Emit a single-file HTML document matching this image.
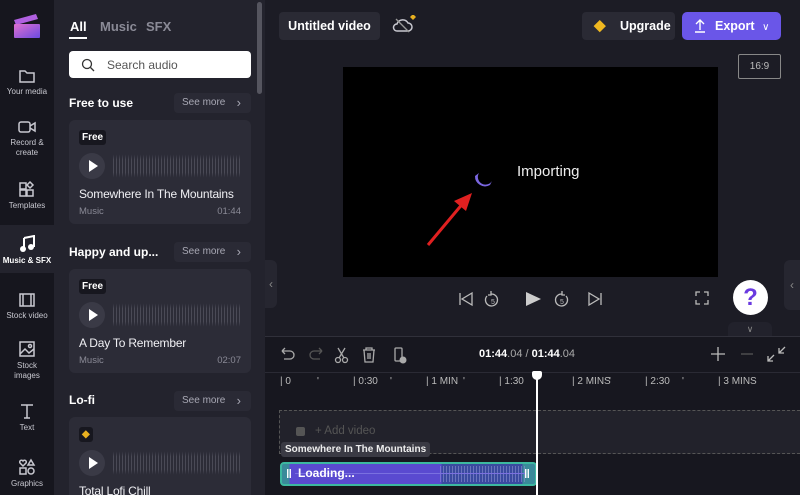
<!DOCTYPE html>
<html><head><style>
*{box-sizing:border-box;margin:0;padding:0}
html,body{width:800px;height:495px;overflow:hidden}
body{background:#1c1c25;font-family:"Liberation Sans",sans-serif;color:#fff;position:relative}
.abs{position:absolute}
.nav{left:0;top:0;width:54px;height:495px;background:#16161e}
.ni{position:absolute;left:0;width:54px;text-align:center;font-size:8px;color:#c8c8d0;line-height:10px}
.ni svg{display:block;margin:0 auto 3px}
.panel{left:54px;top:0;width:211px;height:495px;background:#23232d}
.card{position:absolute;left:69px;width:182px;background:#2c2c37;border-radius:6px}
.free{position:absolute;left:10px;top:10px;background:#17171f;font-size:10px;font-weight:bold;padding:2px 3px;border-radius:3px}
.play{position:absolute;left:10px;width:26px;height:26px;border-radius:50%;background:#3a3a46}
.play:after{content:"";position:absolute;left:10px;top:7px;border-left:9px solid #fff;border-top:6px solid transparent;border-bottom:6px solid transparent}
.wave{position:absolute;left:44px;width:128px;height:26px;background:repeating-linear-gradient(90deg,#4a4a56 0 1px,transparent 1px 3px);-webkit-mask:linear-gradient(180deg,transparent 5%,#000 25%,#000 75%,transparent 95%)}
.title{position:absolute;left:10px;font-size:12px;color:#f0f0f4;letter-spacing:-0.2px;white-space:nowrap}
.sub{position:absolute;left:10px;right:10px;font-size:9.5px;color:#8a8a96}
.sub span{float:right}
.hd{position:absolute;left:69px;font-size:12px;font-weight:bold}
.see{position:absolute;left:174px;width:77px;height:20px;background:#2a2a35;border-radius:4px;font-size:10px;color:#a8a8b4;line-height:20px;padding-left:8px}
.see:after{content:"›";position:absolute;right:10px;font-size:13px}
.ico{stroke:#c8c8d0;fill:none;stroke-width:1.5}
</style></head><body>
<div class="abs nav">
 <svg class="abs" style="left:12px;top:12px" width="30" height="28" viewBox="0 0 30 28"><defs><linearGradient id="g" x1="0" y1="0" x2="1" y2="1"><stop offset="0" stop-color="#e070d0"/><stop offset="1" stop-color="#6a4ae0"/></linearGradient></defs><path d="M2 8 L24 2 L26 7 L4 13Z" fill="#b060e0"/><rect x="2" y="12" width="26" height="14" rx="1" fill="url(#g)"/></svg>
 <div class="ni" style="top:68px"><svg width="18" height="16" class="ico"><path d="M2 3h5l2 2h7v9H2z"/></svg>Your media</div>
 <div class="ni" style="top:119px"><svg width="20" height="16" class="ico"><rect x="2" y="3" width="11" height="10" rx="2"/><path d="M13 7l5-3v8l-5-3"/></svg>Record &amp;<br>create</div>
 <div class="ni" style="top:180px"><svg width="18" height="18" class="ico"><rect x="2" y="3" width="6" height="6"/><rect x="2" y="10" width="6" height="6"/><rect x="9" y="10" width="6" height="6"/><path d="M12 2l3 3-3 3-3-3z"/></svg>Templates</div>
 <div class="abs" style="left:0;top:225px;width:54px;height:48px;background:#23232d"></div>
 <div class="ni" style="top:235px;color:#fff;font-weight:bold"><svg width="18" height="18"><path d="M6 3l10-2v11" stroke="#fff" stroke-width="2" fill="none"/><circle cx="5" cy="14" r="3" fill="#fff"/><circle cx="13" cy="12" r="3" fill="#fff"/><path d="M6 3v11" stroke="#fff" stroke-width="2"/></svg>Music &amp; SFX</div>
 <div class="ni" style="top:292px"><svg width="18" height="16" class="ico"><rect x="2" y="2" width="14" height="12"/><path d="M5 2v12M13 2v12"/></svg>Stock video</div>
 <div class="ni" style="top:340px"><svg width="18" height="18" class="ico"><rect x="2" y="2" width="14" height="14"/><path d="M2 14l5-5 4 4 5-4"/><circle cx="12" cy="6" r="1.5"/></svg>Stock<br>images</div>
 <div class="ni" style="top:402px"><svg width="18" height="18" class="ico"><path d="M3 3h12M9 3v13M6 16h6"/></svg>Text</div>
 <div class="ni" style="top:458px"><svg width="18" height="18" class="ico"><rect x="2" y="10" width="6" height="6"/><circle cx="13" cy="13" r="3"/><path d="M13 2l3 5h-6z"/><path d="M5 8l-3-3a1.5 1.5 0 013-2 1.5 1.5 0 013 2z"/></svg>Graphics</div>
</div>
<div class="abs panel"></div>
<div class="abs" style="left:257px;top:2px;width:5px;height:92px;background:#55555f;border-radius:3px"></div>
<div class="abs" style="left:70px;top:19px;font-size:13px;font-weight:bold">All</div>
<div class="abs" style="left:69px;top:37px;width:18px;height:2px;background:#fff"></div>
<div class="abs" style="left:100px;top:19px;font-size:13px;font-weight:bold;color:#8a8a96">Music</div>
<div class="abs" style="left:146px;top:19px;font-size:13px;font-weight:bold;color:#8a8a96">SFX</div>
<div class="abs" style="left:69px;top:51px;width:182px;height:27px;background:#fff;border-radius:4px"><svg class="abs" style="left:12px;top:7px" width="14" height="14"><circle cx="6" cy="6" r="4.5" stroke="#333" stroke-width="1.3" fill="none"/><path d="M9.5 9.5l3.5 3.5" stroke="#333" stroke-width="1.3"/></svg><span class="abs" style="left:38px;top:7px;font-size:12px;color:#555">Search audio</span></div>
<div class="hd" style="top:96px">Free to use</div><div class="see" style="top:93px">See more</div>
<div class="card" style="top:120px;height:104px"><div class="free">Free</div><div class="play" style="top:33px"></div><div class="wave" style="top:33px"></div><div class="title" style="top:67px">Somewhere In The Mountains</div><div class="sub" style="top:86px">Music<span>01:44</span></div></div>
<div class="hd" style="top:245px">Happy and up...</div><div class="see" style="top:242px">See more</div>
<div class="card" style="top:269px;height:104px"><div class="free">Free</div><div class="play" style="top:33px"></div><div class="wave" style="top:33px"></div><div class="title" style="top:67px">A Day To Remember</div><div class="sub" style="top:86px">Music<span>02:07</span></div></div>
<div class="hd" style="top:393px">Lo-fi</div><div class="see" style="top:391px">See more</div>
<div class="card" style="top:417px;height:90px"><div class="free" style="color:#e8b020">◆</div><div class="play" style="top:33px"></div><div class="wave" style="top:33px"></div><div class="title" style="top:67px">Total Lofi Chill</div></div>
<div class="abs" style="left:265px;top:260px;width:12px;height:48px;background:#262630;border-radius:0 6px 6px 0;color:#888;font-size:12px;line-height:48px;text-align:center">‹</div>
<div class="abs" style="left:279px;top:12px;width:101px;height:28px;background:#2a2a34;border-radius:4px;font-size:12.5px;font-weight:bold;line-height:28px;text-align:center">Untitled video</div>
<svg class="abs" style="left:392px;top:14px" width="26" height="22"><path d="M5 17h11a4 4 0 000-8 6 6 0 00-11 1 3.5 3.5 0 000 7z" class="ico" stroke="#999"/><path d="M4 5l13 13" stroke="#999" stroke-width="1.3"/><path d="M18 3l2-2h2l2 2-3 3z" fill="#e8b020"/></svg>
<div class="abs" style="left:582px;top:12px;width:93px;height:28px;background:#2a2a34;border-radius:4px;font-size:12.5px;font-weight:bold;line-height:28px;padding-left:38px">Upgrade<span class="abs" style="left:12px;top:0;color:#f0b820;font-size:15px">◆</span></div>
<div class="abs" style="left:682px;top:12px;width:99px;height:28px;background:#6a56e8;border-radius:5px;font-size:12.5px;font-weight:bold;line-height:28px;padding-left:33px">Export <span style="font-weight:normal;font-size:10px;margin-left:4px">∨</span><svg class="abs" style="left:12px;top:7px" width="12" height="14"><path d="M6 11V1M2 5l4-4 4 4M1 13h10" stroke="#fff" stroke-width="1.4" fill="none"/></svg></div>
<div class="abs" style="left:738px;top:54px;width:43px;height:25px;border:1px solid #888;border-radius:2px;font-size:10px;color:#bbb;line-height:23px;text-align:center">16:9</div>
<div class="abs" style="left:343px;top:67px;width:375px;height:210px;background:#000"></div>
<svg class="abs" style="left:472px;top:170px" width="22" height="20"><path d="M3 6A10 10 0 0018 15L20 11A6 6 0 017 3z" fill="#7a66e0"/></svg>
<div class="abs" style="left:517px;top:163px;font-size:15px;color:#eee">Importing</div>
<svg class="abs" style="left:420px;top:185px" width="56" height="66"><path d="M8 60L44 17" stroke="#e02020" stroke-width="3"/><path d="M52 8L34 16 46 26z" fill="#e02020"/></svg>
<svg class="abs" style="left:455px;top:287px" width="160" height="24" fill="none" stroke="#bbb" stroke-width="1.3"><path d="M5 6v12M17 6l-10 6 10 6z"/><path d="M36 7a6 6 0 11-4 2M36 4v4h-3"/><text x="38" y="17" font-size="7" fill="#bbb" stroke="none" text-anchor="middle" font-family="Liberation Sans">5</text><path d="M71 5l15 7-15 7z" fill="#ccc" stroke="none"/><path d="M107 7a6 6 0 104 2M107 4v4h3"/><text x="107" y="17" font-size="7" fill="#bbb" stroke="none" text-anchor="middle" font-family="Liberation Sans">5</text><path d="M134 6l10 6-10 6zM146 6v12"/></svg>
<svg class="abs" style="left:695px;top:291px" width="14" height="14" fill="none" stroke="#bbb" stroke-width="1.3"><path d="M1 5V1h4M9 1h4v4M13 9v4H9M5 13H1V9"/></svg>
<div class="abs" style="left:733px;top:280px;width:35px;height:35px;border-radius:50%;background:#fff;font-size:24px;font-weight:bold;color:#6a3ae0;text-align:center;line-height:35px">?</div>
<div class="abs" style="left:784px;top:260px;width:16px;height:50px;background:#262630;border-radius:6px 0 0 6px;color:#888;font-size:12px;line-height:50px;text-align:center">‹</div>
<div class="abs" style="left:728px;top:322px;width:44px;height:15px;background:#22222c;border-radius:6px 6px 0 0;color:#888;font-size:9px;text-align:center;line-height:15px">∨</div>
<div class="abs" style="left:265px;top:336px;width:535px;height:159px;background:#17171f;border-top:1px solid #30303a"></div>
<svg class="abs" style="left:278px;top:345px" width="130" height="20" fill="none" stroke="#aaa" stroke-width="1.3"><path d="M4 6h8a4 4 0 010 8H6M4 6l3-3M4 6l3 3"/><path d="M44 6h-8a4 4 0 000 8h6M44 6l-3-3M44 6l-3 3" stroke="#555"/><circle cx="60" cy="15" r="2.5"/><circle cx="67" cy="15" r="2.5"/><path d="M61 13L67 3M66 13L60 3"/><path d="M85 5h12M88 5V3h6v2M86 5l1 12h8l1-12M90 8v6M92 8v6"/><rect x="117" y="3" width="7" height="13" rx="1"/><circle cx="125" cy="15" r="3.5" fill="#aaa" stroke="none"/></svg>
<div class="abs" style="left:479px;top:348px;font-size:11px;color:#aaa"><b style="color:#fff">01:44</b>.04 / <b style="color:#fff">01:44</b>.04</div>
<svg class="abs" style="left:708px;top:345px" width="80" height="18" fill="none" stroke-width="1.3"><path d="M10 2v14M3 9h14" stroke="#bbb"/><path d="M33 9h12" stroke="#555"/><path d="M60 16l6-6M60 11v5h5M77 2l-6 6M71 3v5h5" stroke="#bbb"/></svg>
<div class="abs" style="left:265px;top:372px;width:535px;height:1px;background:#2a2a34"></div>
<div class="abs" style="top:376px;left:280px;width:520px;height:14px;font-size:10px;color:#bbb">
<span class="abs" style="left:0">|&nbsp;0</span><span class="abs" style="left:37px">'</span>
<span class="abs" style="left:73px">|&nbsp;0:30</span><span class="abs" style="left:110px">'</span>
<span class="abs" style="left:146px">|&nbsp;1 MIN</span><span class="abs" style="left:183px">'</span>
<span class="abs" style="left:219px">|&nbsp;1:30</span>
<span class="abs" style="left:292px">|&nbsp;2 MINS</span><span class="abs" style="left:329px">'</span>
<span class="abs" style="left:365px">|&nbsp;2:30</span><span class="abs" style="left:402px">'</span>
<span class="abs" style="left:438px">|&nbsp;3 MINS</span></div>
<div class="abs" style="left:279px;top:410px;width:521px;height:44px;border:1px dashed #555;border-right:none;background:#22222b"></div>
<div class="abs" style="left:296px;top:427px;width:9px;height:9px;background:#555;border-radius:2px"></div>
<div class="abs" style="left:315px;top:425px;font-size:11.5px;color:#555">+ Add video</div>
<div class="abs" style="left:281px;top:442px;background:#3a3a44;border-radius:3px;padding:2px 4px;font-size:10px;font-weight:bold;color:#eee">Somewhere In The Mountains</div>
<div class="abs" style="left:280px;top:462px;width:257px;height:24px;border:2px solid #3cb8a0;border-radius:4px;background:linear-gradient(90deg,#3a8a9a 0 3%,#5a4ad0 3% 63%,#3a4aa0 63% 95%,#3a8a9a 95%)"></div>
<div class="abs" style="left:440px;top:466px;width:85px;height:16px;background:repeating-linear-gradient(90deg,#8a90d0 0 1px,transparent 1px 3px);opacity:.6"></div>
<div class="abs" style="left:295px;top:473px;width:230px;height:1px;background:#7a70e0"></div>
<div class="abs" style="left:298px;top:466px;font-size:12px;font-weight:bold">Loading...</div>
<div class="abs" style="left:286px;top:467px;font-size:12px;font-weight:bold">‖</div>
<div class="abs" style="left:524px;top:467px;font-size:12px;font-weight:bold">‖</div>
<div class="abs" style="left:536px;top:378px;width:2px;height:117px;background:#fff"></div>
<div class="abs" style="left:532px;top:371px;width:10px;height:9px;background:#fff;border-radius:2px 2px 5px 5px"></div>
</body></html>
